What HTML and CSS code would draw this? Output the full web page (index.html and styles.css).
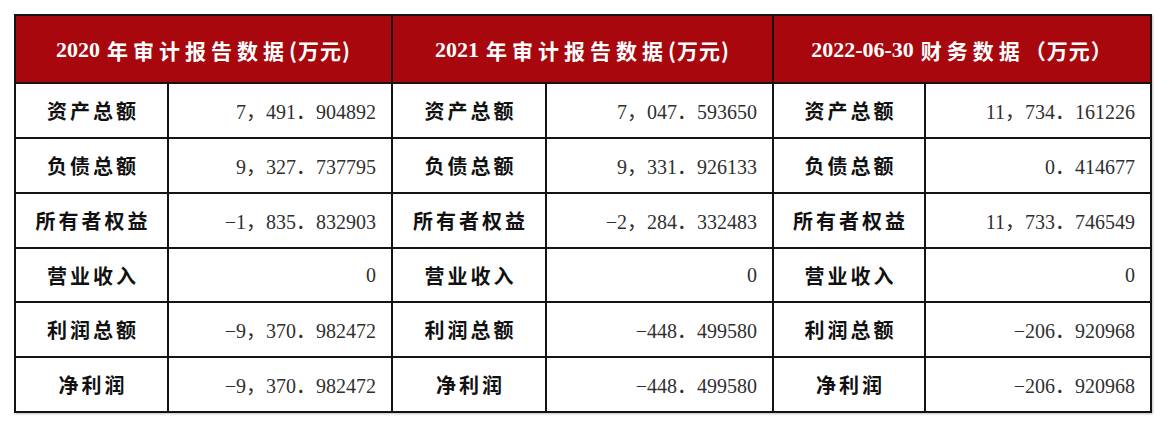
FILE: index.html
```html
<!DOCTYPE html>
<html lang="zh-CN">
<head>
<meta charset="utf-8">
<title>财务数据</title>
<link rel="stylesheet" href="styles.css">
</head>
<body>
<div class="page">
  <div class="grid">
    <div class="head"><span class="hd">2020</span><span class="hc">年审计报告数据</span><span class="hp">(万元)</span></div>
    <div class="head"><span class="hd">2021</span><span class="hc">年审计报告数据</span><span class="hp">(万元)</span></div>
    <div class="head"><span class="hd">2022-06-30</span><span class="hc">财务数据</span><span class="hp">（万元）</span></div>

    <div class="label">资产总额</div><div class="num">7，491．904892</div>
    <div class="label">资产总额</div><div class="num">7，047．593650</div>
    <div class="label">资产总额</div><div class="num">11，734．161226</div>

    <div class="label">负债总额</div><div class="num">9，327．737795</div>
    <div class="label">负债总额</div><div class="num">9，331．926133</div>
    <div class="label">负债总额</div><div class="num">0．414677</div>

    <div class="label">所有者权益</div><div class="num">−1，835．832903</div>
    <div class="label">所有者权益</div><div class="num">−2，284．332483</div>
    <div class="label">所有者权益</div><div class="num">11，733．746549</div>

    <div class="label">营业收入</div><div class="num">0</div>
    <div class="label">营业收入</div><div class="num">0</div>
    <div class="label">营业收入</div><div class="num">0</div>

    <div class="label">利润总额</div><div class="num">−9，370．982472</div>
    <div class="label">利润总额</div><div class="num">−448．499580</div>
    <div class="label">利润总额</div><div class="num">−206．920968</div>

    <div class="label">净利润</div><div class="num">−9，370．982472</div>
    <div class="label">净利润</div><div class="num">−448．499580</div>
    <div class="label">净利润</div><div class="num">−206．920968</div>
  </div>
</div>
</body>
</html>
```

FILE: styles.css
```css
html, body {
  margin: 0;
  padding: 0;
  background: #ffffff;
}

.page {
  width: 1164px;
  height: 422px;
  box-sizing: border-box;
  padding: 14px 0 0 14px;
}

.grid {
  display: grid;
  width: 1138px;
  box-sizing: border-box;
  grid-template-columns: 151px 222px 152px 225px 150px 224px;
  grid-template-rows: 66px 53px 53px 53px 52px 53px 53px;
  gap: 2px;
  padding: 2px;
  background: #141414;
  box-shadow: 1px 1px 2px rgba(0,0,0,0.25);
}

.head {
  grid-column: span 2;
  background: #a8070d;
  color: #ffffff;
  display: flex;
  align-items: center;
  justify-content: center;
  font-family: "Liberation Serif", "Noto Sans CJK SC", serif;
  font-weight: 700;
  font-size: 21px;
  padding-top: 2px;
}

.hd {
  font-size: 22px;
  margin-right: 7px;
}

.hc {
  font-family: "Noto Sans CJK SC", sans-serif;
  letter-spacing: 5px;
}

.hp {
  font-family: "Noto Sans CJK SC", sans-serif;
  letter-spacing: 1px;
}

.label {
  background: #ffffff;
  display: flex;
  align-items: center;
  justify-content: center;
  font-family: "Noto Sans CJK SC", sans-serif;
  font-weight: 700;
  font-size: 20px;
  letter-spacing: 3px;
  color: #111111;
  padding-left: 3px;
}

.num {
  background: #ffffff;
  display: flex;
  align-items: center;
  justify-content: flex-end;
  padding-right: 15px;
  font-family: "Liberation Serif", "Noto Sans CJK SC", serif;
  font-size: 20px;
  color: #2f2f2f;
}
```
